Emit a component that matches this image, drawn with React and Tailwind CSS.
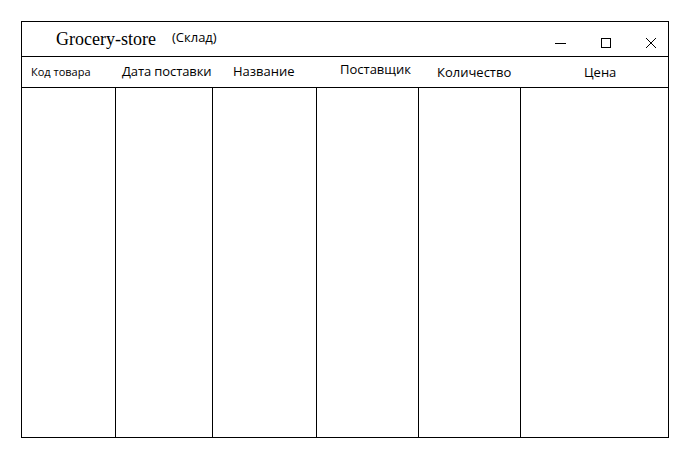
import React from 'react';

const cols = 'grid-cols-[94px_97px_104px_102px_102px_1fr]';

const headers = [
  { label: 'Код товара', cls: 'pl-[9px] text-[11px]' },
  { label: 'Дата поставки', cls: 'pl-[6px] text-[13px] tracking-[-0.1px] pb-[1px]' },
  { label: 'Название', cls: 'pl-[20px] text-[13px]' },
  { label: 'Поставщик', cls: 'pl-[23px] text-[13px] pb-[4px]' },
  { label: 'Количество', cls: 'pl-[18px] text-[13px] pt-[1px]' },
  { label: 'Цена', cls: 'pl-[63px] text-[13px] pt-[1px]' },
];

export default function App() {
  return (
    <div className="w-[682px] h-[456px] bg-white pt-[21px] pl-[21px]">
      <div className="w-[648px] h-[417px] border border-black flex flex-col">
        {/* title bar */}
        <div className="h-[35px] border-b border-black flex items-center shrink-0">
          <span className="ml-[34px] text-[18px] text-black font-['Liberation_Serif',serif]">Grocery-store</span>
          <span className="ml-[16px] text-[13px] text-black font-['Open_Sans',sans-serif] -mt-[3px]">(Склад)</span>
          <div className="ml-auto flex items-center mr-[11px] mt-[8px]">
            <svg width="12" height="12" viewBox="0 0 12 12" className="mr-[33px]">
              <line x1="0" y1="6.5" x2="11" y2="6.5" stroke="black" strokeWidth="1" />
            </svg>
            <svg width="12" height="12" viewBox="0 0 12 12" className="mr-[33px]">
              <rect x="1.5" y="1.5" width="9" height="9" fill="none" stroke="black" strokeWidth="1" />
            </svg>
            <svg width="12" height="12" viewBox="0 0 12 12">
              <path d="M1 1 L11 11 M11 1 L1 11" stroke="black" strokeWidth="1" fill="none" />
            </svg>
          </div>
        </div>
        {/* header row */}
        <div className={`grid ${cols} h-[31px] border-b border-black shrink-0 font-['Open_Sans',sans-serif] text-black`}>
          {headers.map((h) => (
            <div key={h.label} className={`flex items-center whitespace-nowrap ${h.cls}`}>
              {h.label}
            </div>
          ))}
        </div>
        {/* body */}
        <div className={`grid ${cols} flex-1`}>
          {headers.map((h, i) => (
            <div key={h.label} className={i < headers.length - 1 ? 'border-r border-black' : ''} />
          ))}
        </div>
      </div>
    </div>
  );
}
